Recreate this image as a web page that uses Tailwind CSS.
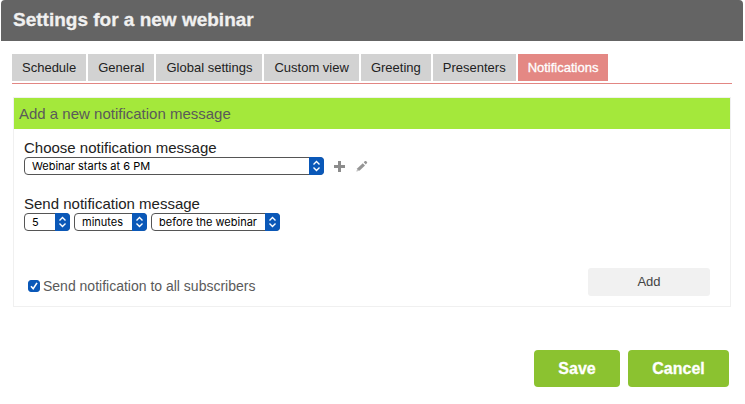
<!DOCTYPE html>
<html lang="en">
<head>
    <meta charset="UTF-8">
    <meta name="viewport" content="width=device-width, initial-scale=1.0">
    <title>Settings for a new webinar</title>
    <script src="https://cdn.jsdelivr.net/npm/@tailwindcss/browser@4"></script>
</head>
<body class="bg-white text-[#222] font-['Liberation_Sans',Arial,sans-serif]">
    <div class="ml-px mr-0.5">
        <header class="h-[41px] flex items-center px-3 bg-[#646464] rounded-t-sm">
            <h1 class="text-[19px] font-bold text-[#f0f0f0] [-webkit-text-stroke:0.3px_#f0f0f0]">Settings for a new webinar</h1>
        </header>

        <main class="pl-[11px] pr-3 pt-[13px]">
            <nav class="flex gap-0.5 pb-0.5 mr-[-1px] border-b border-[#e28683] text-[13px] leading-[27px] whitespace-nowrap">
                <a href="#schedule" class="px-2.5 bg-[#d2d2d2]">Schedule</a>
                <a href="#general" class="px-2.5 bg-[#d2d2d2]">General</a>
                <a href="#global" class="px-2.5 bg-[#d2d2d2]">Global settings</a>
                <a href="#view" class="px-2.5 bg-[#d2d2d2]">Custom view</a>
                <a href="#greeting" class="px-2.5 bg-[#d2d2d2]">Greeting</a>
                <a href="#presenters" class="px-2.5 bg-[#d2d2d2]">Presenters</a>
                <a href="#notifications" class="px-2.5 bg-[#e48884] text-white [-webkit-text-stroke:0.3px_white]" aria-current="page">Notifications</a>
            </nav>

            <form>
                <section class="mt-[13px] ml-px border border-[#f0f0f0]">
                    <h2 class="h-[31px] flex items-center px-[5px] pt-px bg-[#a4e83b] text-[15px] text-[#5a5a5a]">Add a new notification message</h2>

                    <div class="pl-2.5 pr-5 pt-2.5 pb-2.5">
                        <label for="message" class="block text-[15px] leading-[18px]">Choose notification message</label>
                        <div class="flex items-center">
                            <div class="relative w-[300px]">
                                <select id="message" class="block w-full h-[18px] pl-[7px] pr-5 appearance-none rounded border border-[#555] bg-white text-[11px] leading-4 text-black font-[Inter,sans-serif]">
                                    <option>Webinar starts at 6 PM</option>
                                </select>
                                <svg class="absolute right-0 top-0 pointer-events-none" width="15" height="18" viewBox="0 0 15 18" fill="none">
                                    <path d="M0 0h11a4 4 0 0 1 4 4v10a4 4 0 0 1-4 4H0z" fill="#0a58b8"/>
                                    <path d="M4.5 7.5l3-3 3 3M4.5 10.5l3 3 3-3" stroke="#fff" stroke-width="1.4"/>
                                </svg>
                            </div>
                            <button type="button" aria-label="Add message" class="ml-2.5">
                                <svg class="block" width="11" height="11" viewBox="0 0 11 11" fill="#8c8c8c">
                                    <path d="M4 0h3v4h4v3H7v4H4V7H0V4h4z"/>
                                </svg>
                            </button>
                            <button type="button" aria-label="Edit message" class="ml-[11px]">
                                <svg class="block" width="12" height="12" viewBox="0 0 12 12" fill="#959595">
                                    <path d="M0.500 11.500l.9-3.300 5.400-5 2.200 2.200-5.300 5.100z"/>
                                    <path d="M7.700 2.300L9 1.100q.5-.4 1 0l1 1q.5.5 0 1L9.800 4.400z"/>
                                    <path d="M1.600 9.200l1.300 1.300-1.200.3-.4-.4z" fill="#fff"/>
                                </svg>
                            </button>
                        </div>

                        <label for="amount" class="block mt-5 text-[15px] leading-[18px]">Send notification message</label>
                        <div class="flex gap-1">
                            <div class="relative w-[46px]">
                                <select id="amount" class="block w-full h-[18px] pl-[7px] pr-4 appearance-none rounded border border-[#555] bg-white text-[11px] leading-4 text-black font-[Inter,sans-serif]">
                                    <option>5</option>
                                </select>
                                <svg class="absolute right-0 top-0 pointer-events-none" width="15" height="18" viewBox="0 0 15 18" fill="none">
                                    <path d="M0 0h11a4 4 0 0 1 4 4v10a4 4 0 0 1-4 4H0z" fill="#0a58b8"/>
                                    <path d="M4.5 7.5l3-3 3 3M4.5 10.5l3 3 3-3" stroke="#fff" stroke-width="1.4"/>
                                </svg>
                            </div>
                            <div class="relative w-[73px]">
                                <select aria-label="Unit of time" class="block w-full h-[18px] pl-[7px] pr-4 appearance-none rounded border border-[#555] bg-white text-[11px] leading-4 text-black font-[Inter,sans-serif]">
                                    <option>minutes</option>
                                </select>
                                <svg class="absolute right-0 top-0 pointer-events-none" width="15" height="18" viewBox="0 0 15 18" fill="none">
                                    <path d="M0 0h11a4 4 0 0 1 4 4v10a4 4 0 0 1-4 4H0z" fill="#0a58b8"/>
                                    <path d="M4.5 7.5l3-3 3 3M4.5 10.5l3 3 3-3" stroke="#fff" stroke-width="1.4"/>
                                </svg>
                            </div>
                            <div class="relative w-[129px]">
                                <select aria-label="When to send" class="block w-full h-[18px] pl-[7px] pr-4 appearance-none rounded border border-[#555] bg-white text-[11px] leading-4 text-black font-[Inter,sans-serif]">
                                    <option>before the webinar</option>
                                </select>
                                <svg class="absolute right-0 top-0 pointer-events-none" width="15" height="18" viewBox="0 0 15 18" fill="none">
                                    <path d="M0 0h11a4 4 0 0 1 4 4v10a4 4 0 0 1-4 4H0z" fill="#0a58b8"/>
                                    <path d="M4.5 7.5l3-3 3 3M4.5 10.5l3 3 3-3" stroke="#fff" stroke-width="1.4"/>
                                </svg>
                            </div>
                        </div>

                        <div class="mt-[37px] flex items-end justify-between">
                            <div class="flex items-center gap-[3px] pl-1">
                                <div class="relative size-3">
                                    <input id="all" type="checkbox" checked class="block size-3 appearance-none rounded-[3px] border border-[#0a58b8] checked:bg-[#0a58b8]">
                                    <svg class="absolute inset-0 pointer-events-none" width="12" height="12" viewBox="0 0 12 12" fill="none" stroke="#fff" stroke-width="1.6">
                                        <path d="M3 6.3l2.2 2.5L9 2.9"/>
                                    </svg>
                                </div>
                                <label for="all" class="text-sm leading-5 text-[#5a5a5a]">Send notification to all subscribers</label>
                            </div>
                            <button type="button" class="w-[122px] h-7 rounded-[3px] bg-[#f1f1f1] text-[13px] text-[#444]">Add</button>
                        </div>
                    </div>
                </section>

                <div class="mt-[43px] mr-0.5 flex justify-end gap-2">
                    <button type="submit" class="w-[86px] h-[37px] rounded bg-[#8bc230] text-base font-bold text-white [-webkit-text-stroke:0.3px_white]">Save</button>
                    <button type="button" class="w-[101px] h-[37px] rounded bg-[#8bc230] text-base font-bold text-white [-webkit-text-stroke:0.3px_white]">Cancel</button>
                </div>
            </form>
        </main>
    </div>
</body>
</html>
